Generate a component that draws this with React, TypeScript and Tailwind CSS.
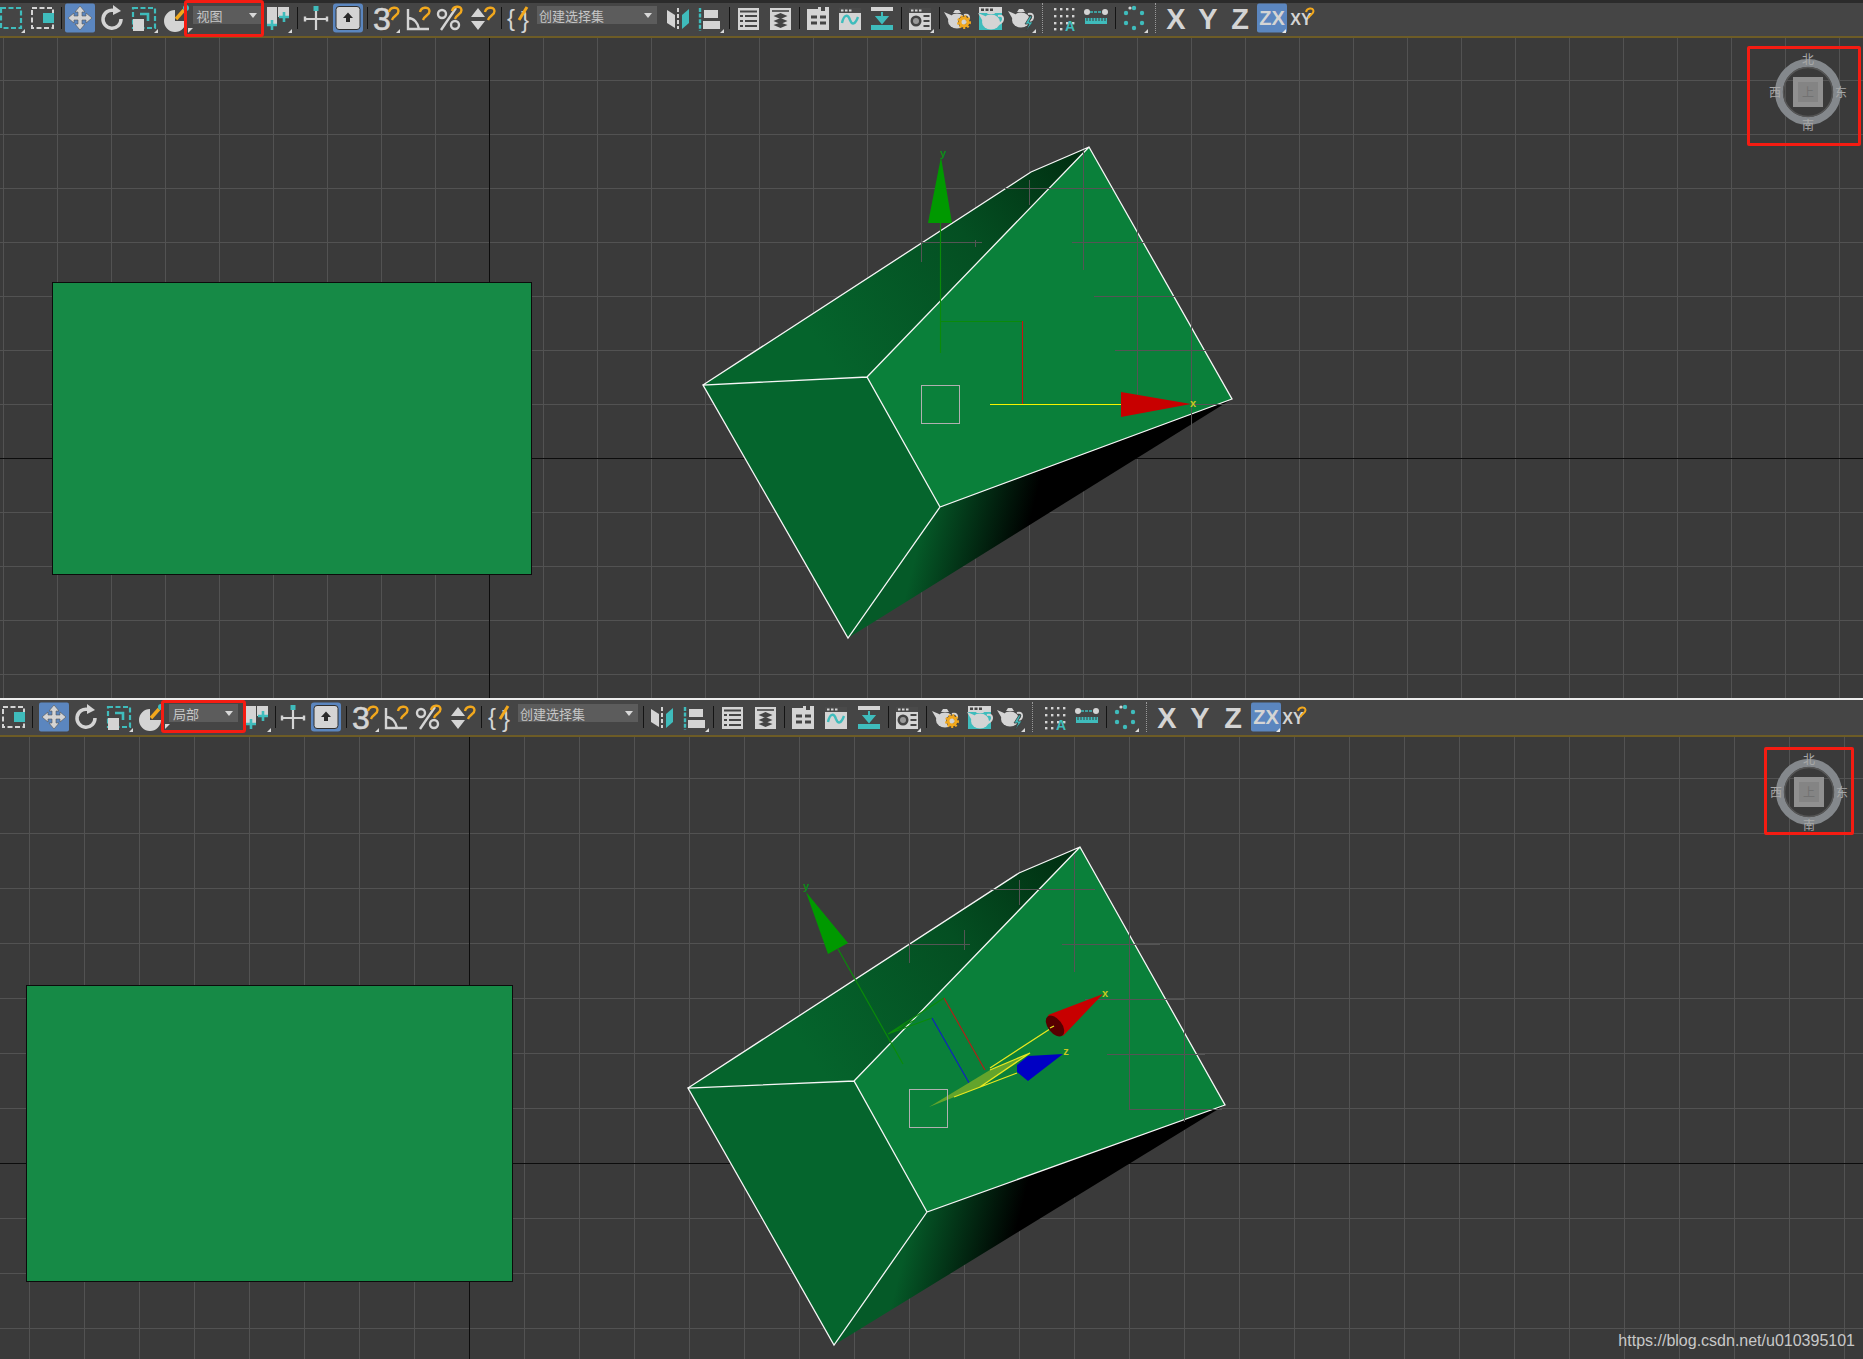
import React from "react";

const T = "#3fbcbc";
const W = "#d4d4d4";
const O = "#f2a81d";
const B = "#5b86bf";
const D = "#3c3c3c";

const hook = (x = 0, y = 0) => (
  <path transform={`translate(${x} ${y})`} d="M18 9 c1 -5 9 -6 9.5 -1 c0.3 4 -5 4.5 -6.5 9" fill="none" stroke={O} strokeWidth="2.4" />
);

const teapot = (x = 0, y = 0, fill = W) => (
  <g transform={`translate(${x} ${y})`} fill={fill}>
    <ellipse cx="14" cy="17" rx="9" ry="7.5" />
    <path d="M1 8 L8 11 L8 20 Z" />
    <path d="M10 9 h8 l-2 -3 h-4 z" />
    <path d="M21 11 c6 -2 7 5 1 8" fill="none" stroke={fill} strokeWidth="2" />
  </g>
);

const winTop = (
  <>
    <rect x="5" y="5" width="22" height="22" fill={W} />
    <rect x="5" y="5" width="22" height="5" fill="#4a4a4a" />
    <rect x="7" y="6.5" width="2.5" height="2" fill={W} />
    <rect x="11" y="6.5" width="2.5" height="2" fill={W} />
    <rect x="15" y="6.5" width="2.5" height="2" fill={W} />
  </>
);

const glyphs: Record<string, React.ReactNode> = {
  sel: <rect x="6" y="5" width="20" height="20" fill="none" stroke={T} strokeWidth="2.2" strokeDasharray="5 2.5" />,
  selwin: (
    <>
      <rect x="6" y="5" width="21" height="20" fill="none" stroke={W} strokeWidth="2" strokeDasharray="5 2.5" />
      <rect x="17" y="10" width="11" height="10" fill={T} />
    </>
  ),
  move: (
    <>
      <rect x="1" y="0.5" width="30" height="29" rx="2" fill={B} />
      <path d="M16 3 l5 6 h-3 v4 h4 v-3 l6 5 -6 5 v-3 h-4 v4 h3 l-5 6 -5 -6 h3 v-4 h-4 v3 l-6 -5 6 -5 v3 h4 v-4 h-3 z" fill={W} stroke="#555" strokeWidth="0.6" />
    </>
  ),
  rotate: (
    <>
      <path d="M25 16 a9 9 0 1 1 -7 -8.6" fill="none" stroke={W} strokeWidth="3.5" />
      <path d="M17 2 l8 6 -8 4 z" fill={W} />
    </>
  ),
  scale: (
    <>
      <rect x="5" y="5" width="22" height="20" fill="none" stroke={T} strokeWidth="2.2" strokeDasharray="5 2.5" />
      <rect x="5" y="16" width="11" height="12" fill={W} />
      <path d="M12 11 h8 v7" fill="none" stroke={T} strokeWidth="2.6" />
    </>
  ),
  pie: (
    <>
      <path d="M15 7 a11 11 0 1 0 11 11 h-11 z" fill={W} />
      <path d="M16 16 L24 7" stroke={O} strokeWidth="3.4" />
      <circle cx="26" cy="5" r="3" fill={T} />
    </>
  ),
  pivot: (
    <>
      <rect x="5" y="4" width="10" height="18" fill={W} />
      <rect x="16" y="4" width="11" height="10" fill={W} />
      <path d="M10 17 v10 M5 22 h10 M22 9 v10 M17 14 h10" stroke={T} strokeWidth="2.6" />
    </>
  ),
  axis: (
    <>
      <path d="M5 16 h22 M16 7 v20" stroke={W} strokeWidth="2.2" />
      <path d="M5 13.5 v5 M27 13.5 v5" stroke={W} strokeWidth="2.4" />
      <rect x="13.5" y="3" width="5" height="5" fill={T} />
    </>
  ),
  btn: (
    <>
      <rect x="1" y="0.5" width="30" height="29" rx="3" fill={B} />
      <rect x="4" y="3.5" width="24" height="23" rx="3" fill={W} stroke="#2f2f2f" />
      <path d="M16 9.5 l5 5.5 h-3 v4 h-4 v-4 h-3 z" fill="#2a2a2a" />
    </>
  ),
  snap: (
    <>
      <text x="3" y="27" fontSize="32" fontWeight="400" fontFamily="'Liberation Sans', sans-serif" fill={W} stroke={W} strokeWidth="0.6">3</text>
      {hook(1, 0)}
    </>
  ),
  angle: (
    <>
      <path d="M6 6 V26 H27 M6 15 c6 0 10 5 11 11" fill="none" stroke={W} strokeWidth="2.4" />
      {hook(0, 0)}
    </>
  ),
  percent: (
    <>
      <circle cx="8" cy="11" r="4" fill="none" stroke={W} strokeWidth="2.4" />
      <circle cx="21" cy="22" r="4" fill="none" stroke={W} strokeWidth="2.4" />
      <path d="M7 27 L22 5" stroke={W} strokeWidth="2.4" />
      {hook(0, -1)}
    </>
  ),
  spin: (
    <>
      <path d="M5 14 l7 -9 7 9 z M5 18 h14 l-7 9 z" fill={W} />
      {hook(1, 0)}
    </>
  ),
  brace: (
    <>
      <text x="3" y="23" fontSize="24" fontFamily="'Liberation Sans', sans-serif" fill={W}>{"{"}</text>
      <text x="17" y="25" fontSize="24" fontFamily="'Liberation Sans', sans-serif" fill={W}>{"}"}</text>
      <path d="M23 4 L15 17" stroke={O} strokeWidth="3" />
    </>
  ),
  mirror: (
    <>
      <path d="M5 7 l8 5 v13 l-8 -5 z" fill={W} />
      <path d="M16 5 v21" stroke={W} strokeWidth="2" strokeDasharray="4 2" />
      <path d="M20 12 l7 -6 v14 l-7 6 z" fill={T} />
    </>
  ),
  align: (
    <>
      <path d="M6 5 v23" stroke={T} strokeWidth="2.4" strokeDasharray="4 1.6" />
      <rect x="10" y="7" width="14" height="8" fill={W} />
      <rect x="9" y="18" width="17" height="8" fill={W} />
    </>
  ),
  list: (
    <>
      <rect x="6" y="5" width="21" height="22" fill={W} />
      <path d="M8 8.5 h17 M8 13 h3 M13 13 h12 M8 18 h3 M13 18 h12 M8 23 h3 M13 23 h12" stroke="#444" strokeWidth="2" />
    </>
  ),
  layers: (
    <>
      <rect x="6" y="5" width="21" height="22" fill={W} />
      <path d="M8 8 h17" stroke="#444" strokeWidth="1.6" />
      <path d="M16.5 10 l7 3 -7 3 -7 -3 z M16.5 15 l7 3 -7 3 -7 -3 z M16.5 19.5 l7 2.5 -7 3 -7 -3 z" fill="#444" />
    </>
  ),
  schem: (
    <>
      <path d="M5 6 h11 v-2 h3 v4 h4 v-4 h4 v23 h-22 z" fill={W} />
      <path d="M9 14 h6 M18 14 h6 M9 20 h6 M18 20 h6" stroke="#444" strokeWidth="3" />
    </>
  ),
  curve: (
    <>
      {winTop}
      <path d="M8 20 c2 -9 6 -9 8 -3 c2 5 5 5 8 -3" fill="none" stroke={T} strokeWidth="2.4" />
    </>
  ),
  dope: (
    <>
      <rect x="5" y="4" width="22" height="4" fill={W} />
      <path d="M16 9 v5 M11 14 h10 l-5 6 z" stroke={T} fill={T} strokeWidth="2" />
      <rect x="5" y="22" width="22" height="5" fill={T} />
    </>
  ),
  mat: (
    <>
      {winTop}
      <circle cx="12" cy="18" r="5.5" fill="#444" />
      <circle cx="12" cy="18" r="3" fill="#999" />
      <path d="M19.5 13 h6 M19.5 18 h6 M19.5 23 h6" stroke="#444" strokeWidth="2" />
    </>
  ),
  tea1: (
    <>
      {teapot(1, 1)}
      <circle cx="22" cy="19" r="5" fill="none" stroke={D} strokeWidth="2" />
      <circle cx="22" cy="19" r="4" fill="none" stroke={O} strokeWidth="3" />
      <circle cx="22" cy="19" r="6" fill="none" stroke={O} strokeWidth="2" strokeDasharray="2 2" />
    </>
  ),
  tea2: (
    <>
      <rect x="5" y="4" width="23" height="23" fill={T} />
      <rect x="5" y="4" width="23" height="6" fill={W} />
      <rect x="7" y="5.5" width="3" height="2.5" fill="#444" />
      <rect x="11.5" y="5.5" width="3" height="2.5" fill="#444" />
      <rect x="16" y="5.5" width="3" height="2.5" fill="#444" />
      {teapot(3, 2)}
    </>
  ),
  tea3: (
    <>
      {teapot(1, 0)}
      <path d="M24 13 l-5 8 h4 l-3 7 7 -9 h-4 l3 -6 z" fill={T} stroke={D} strokeWidth="0.8" />
    </>
  ),
  dotsA: (
    <>
      <g fill={W}>
        {[5, 12, 19].flatMap((y) => [7, 13, 19, 25].map((x) => <rect key={`${x}-${y}`} x={x} y={y} width="2.4" height="2.4" />))}
        <rect x="7" y="25" width="2.4" height="2.4" />
        <rect x="13" y="25" width="2.4" height="2.4" />
      </g>
      <text x="18" y="28" fontSize="14" fontWeight="700" fontFamily="'Liberation Sans', sans-serif" fill={T}>A</text>
    </>
  ),
  tape: (
    <>
      <circle cx="7" cy="9" r="3" fill={W} />
      <circle cx="25" cy="9" r="3" fill={W} />
      <path d="M10 9 h12" stroke={T} strokeWidth="1.6" strokeDasharray="3 1" />
      <rect x="5" y="15" width="22" height="6" fill={T} />
      <path d="M7 15 v3 M10 15 v3 M13 15 v3 M16 15 v3 M19 15 v3 M22 15 v3 M25 15 v3" stroke={D} strokeWidth="1" />
    </>
  ),
  circ: (
    <>
      <circle cx="16" cy="5" r="2.2" fill={T} />
      <circle cx="24" cy="10" r="2.2" fill={T} />
      <circle cx="24" cy="20" r="2.2" fill={T} />
      <circle cx="16" cy="25" r="2.2" fill={T} />
      <circle cx="8" cy="20" r="2.2" fill={T} />
      <circle cx="8" cy="10" r="2.2" fill={T} />
      <circle cx="12" cy="5" r="1.6" fill={W} />
    </>
  ),
  X: <text x="16" y="26" textAnchor="middle" fontSize="29" fontWeight="700" fontFamily="'Liberation Sans', sans-serif" fill={W}>X</text>,
  Y: <text x="16" y="26" textAnchor="middle" fontSize="29" fontWeight="700" fontFamily="'Liberation Sans', sans-serif" fill={W}>Y</text>,
  Z: <text x="16" y="26" textAnchor="middle" fontSize="29" fontWeight="700" fontFamily="'Liberation Sans', sans-serif" fill={W}>Z</text>,
  ZX: (
    <>
      <rect x="1" y="0.5" width="30" height="29" rx="2" fill={B} />
      <text x="16" y="22" textAnchor="middle" fontSize="20" fontWeight="700" fontFamily="'Liberation Sans', sans-serif" fill={W}>ZX</text>
    </>
  ),
  XY: (
    <>
      <text x="13" y="22" textAnchor="middle" fontSize="16" fontWeight="700" fontFamily="'Liberation Sans', sans-serif" fill={W}>XY</text>
      <path d="M18 9 c1 -4 7 -5 7.5 -1 c0.3 3 -4 4 -5 7" fill="none" stroke={O} strokeWidth="2" />
    </>
  ),
};

const flyouts = new Set(["sel", "scale", "pivot", "snap", "align", "mat", "tea3", "circ", "ZX"]);

type Item = [string, string?];

function Tool({ name, w = "w-[32px]", ddTop }: { name: string; w?: string; ddTop: string }) {
  if (name === "sep") {
    return (
      <div className={`${w} h-[30px] shrink-0 flex items-center justify-center`}>
        <div className="w-[1px] h-[22px] bg-[#141414]" />
      </div>
    );
  }
  if (name === "dot") {
    return (
      <div className={`${w} h-[30px] shrink-0 flex items-center justify-center`}>
        <div className="h-[30px] border-l border-dotted border-[#9a9a9a]" />
      </div>
    );
  }
  if (name.startsWith("dd:")) {
    const [, label, width] = name.split(":");
    return (
      <div className={`${w} h-[30px] shrink-0 flex justify-center`}>
        <div
          className={`${ddTop} ${width === "s" ? "w-[69px] pl-[4px]" : "w-[120px] pl-[2px]"} h-[18px] shrink-0 bg-[#5c5c5c] flex items-center justify-between pr-[5px] text-[13px] leading-none text-[#c6c6c6] font-['Noto_Sans_CJK_SC','Liberation_Sans',sans-serif]`}
        >
          <span>{label}</span>
          <span className="w-0 h-0 border-l-[4px] border-r-[4px] border-t-[5px] border-l-transparent border-r-transparent border-t-[#d8d8d8]" />
        </div>
      </div>
    );
  }
  return (
    <div className={`${w} h-[30px] shrink-0 flex justify-center`}>
      <svg width="32" height="30" viewBox="0 0 32 30" className="shrink-0 block overflow-visible">
        {glyphs[name]}
        {flyouts.has(name) && <path d="M30 26 V30 H26 z" fill={name === "ZX" ? "#e8e8e8" : "#d8d8d8"} />}
      </svg>
    </div>
  );
}

const topItems: Item[] = [
  ["sel", "w-[22px]"], ["gap", "w-[4px]"], ["selwin"], ["sep", "w-[6px]"], ["move"], ["rotate"], ["scale"], ["pie"],
  ["dd:视图:s", "w-[70px]"], ["pivot"], ["sep", "w-[6px]"], ["axis"], ["btn"], ["sep", "w-[6px]"], ["snap"], ["angle"], ["percent"], ["spin"],
  ["sep", "w-[6px]"], ["brace"], ["dd:创建选择集:l", "w-[122px]"], ["gap", "w-[4px]"], ["mirror"], ["align"], ["sep", "w-[6px]"], ["list"], ["layers"],
  ["sep", "w-[6px]"], ["schem"], ["curve"], ["dope"], ["sep", "w-[6px]"], ["mat"], ["sep", "w-[6px]"], ["tea1"], ["tea2"], ["tea3"],
  ["dot", "w-[8px]"], ["dotsA", "w-[33px]"], ["tape", "w-[33px]"], ["sep", "w-[6px]"], ["circ"], ["dot", "w-[10px]"],
  ["X"], ["Y"], ["Z"], ["ZX"], ["XY"],
];

const bottomItems: Item[] = [
  ["selwin", "w-[26px]"], ["sep", "w-[12px]"], ["move"], ["rotate"], ["scale", "w-[33px]"], ["pie", "w-[31px]"],
  ["dd:局部:s", "w-[75px]"], ["pivot"], ["sep", "w-[4px]"], ["axis"], ["btn", "w-[34px]"], ["sep", "w-[6px]"], ["snap", "w-[31px]"], ["angle"], ["percent", "w-[34px]"], ["spin"],
  ["sep", "w-[7px]"], ["brace", "w-[31px]"], ["dd:创建选择集:l", "w-[124px]"], ["sep", "w-[6px]"], ["mirror"], ["align", "w-[33px]"], ["sep", "w-[5px]"], ["list"], ["layers", "w-[33px]"],
  ["sep", "w-[6px]"], ["schem"], ["curve", "w-[33px]"], ["dope", "w-[33px]"], ["sep", "w-[6px]"], ["mat"], ["sep", "w-[7px]"], ["tea1"], ["tea2", "w-[33px]"], ["tea3"],
  ["dot", "w-[11px]"], ["dotsA"], ["tape", "w-[33px]"], ["sep", "w-[6px]"], ["circ"], ["dot", "w-[10px]"],
  ["X"], ["Y", "w-[33px]"], ["Z", "w-[33px]"], ["ZX", "w-[33px]"], ["XY", "w-[28px]"],
];

function Toolbar({ items, className, ddTop, children }: { items: Item[]; className: string; ddTop: string; children: React.ReactNode }) {
  return (
    <div className={`relative flex items-start shrink-0 bg-[#454545] border-b-2 border-b-[#6d5c26] ${className}`}>
      {items.map(([name, w], i) =>
        name === "gap" ? <div key={i} className={`${w} shrink-0`} /> : <Tool key={i} name={name} w={w} ddTop={ddTop} />
      )}
      {children}
    </div>
  );
}

function Flyout() {
  return <span className="absolute left-[1px] bottom-[1px] w-0 h-0 border-b-[5px] border-r-[5px] border-r-transparent border-b-[#d8d8d8] rotate-90" />;
}

function Grid({ x0, y0, step, top, bottom }: { x0: number; y0: number; step: number; top: number; bottom: number }) {
  const xs: number[] = [];
  const ys: number[] = [];
  for (let x = x0 % step; x < 1863; x += step) xs.push(x);
  for (let y = y0 - step * Math.ceil((y0 - top) / step); y < bottom; y += step) ys.push(y);
  return (
    <g shapeRendering="crispEdges">
      {xs.map((x) => <line key={`v${x}`} x1={x} x2={x} y1={top} y2={bottom} stroke="#525252" />)}
      {ys.map((y) => <line key={`h${y}`} x1={0} x2={1863} y1={y} y2={y} stroke="#525252" />)}
      <line x1={x0} x2={x0} y1={top} y2={bottom} stroke="#0c0c0c" />
      <line x1={0} x2={1863} y1={y0} y2={y0} stroke="#0c0c0c" />
    </g>
  );
}

type P = [number, number];
const pts = (a: P[]) => a.map((p) => p.join(",")).join(" ");

function Box({ id, peak, shoulder, right, inner, corner, left, bottom }: { id: string; peak: P; shoulder: P; right: P; inner: P; corner: P; left: P; bottom: P }) {
  return (
    <g>
      <defs>
        <linearGradient id={`${id}a`} gradientUnits="userSpaceOnUse" x1={corner[0] - 40} y1={corner[1] - 20} x2={peak[0] + 10} y2={peak[1] + 20}>
          <stop offset="0" stopColor="#05642c" />
          <stop offset="0.55" stopColor="#044f22" />
          <stop offset="1" stopColor="#002d10" />
        </linearGradient>
        <linearGradient id={`${id}b`} gradientUnits="userSpaceOnUse" x1={inner[0] - 15} y1={inner[1] + 10} x2={inner[0] + 85} y2={inner[1] + 35}>
          <stop offset="0" stopColor="#055a28" />
          <stop offset="1" stopColor="#000000" />
        </linearGradient>
      </defs>
      <polygon points={pts([bottom, inner, right])} fill={`url(#${id}b)`} />
      <polygon points={pts([left, shoulder, peak, corner])} fill={`url(#${id}a)`} />
      <polygon points={pts([left, corner, inner, bottom])} fill="#05652d" />
      <polygon points={pts([peak, right, inner, corner])} fill="#0a803a" />
      <path
        d={`M${left} L${shoulder} L${peak} L${right} L${inner} L${corner} L${left} L${bottom} L${inner} M${corner} L${peak}`}
        fill="none"
        stroke="#f6f6f6"
        strokeWidth="1.3"
      />
    </g>
  );
}

function ViewCube({ cx, cy }: { cx: number; cy: number }) {
  const font = "'Noto Sans CJK SC', sans-serif";
  return (
    <g>
      <circle cx={cx} cy={cy} r="29" fill="none" stroke="#84888c" strokeWidth="8" />
      <circle cx={cx} cy={cy} r="24.5" fill="none" stroke="#555" strokeWidth="1.5" />
      <rect x={cx - 15} y={cy - 15} width="30" height="30" fill="#909090" />
      <rect x={cx - 10} y={cy - 10} width="20" height="20" fill="#848484" />
      <g fontFamily={font} textAnchor="middle" fontSize="12">
        <text x={cx} y={cy + 5} fill="#727272">上</text>
        <g fill="#a8a8a8">
          <text x={cx} y={cy - 28}>北</text>
          <text x={cx} y={cy + 38}>南</text>
          <text x={cx - 33} y={cy + 5}>西</text>
          <text x={cx + 33} y={cy + 5}>东</text>
        </g>
      </g>
    </g>
  );
}

const Seg = ({ d, c = "#555" }: { d: string; c?: string }) => <path d={d} fill="none" stroke={c} shapeRendering="crispEdges" />;

function TopScene() {
  return (
    <svg viewBox="0 38 1863 660" className="block w-[1863px] h-[660px]">
      <Grid x0={489.5} y0={458.5} step={54} top={38} bottom={698} />
      <rect x="52.5" y="282.5" width="479" height="292" fill="#168a46" stroke="#0b0b0b" />
      <Box id="t" peak={[1089, 147]} shoulder={[1031, 172]} right={[1232, 399]} inner={[940, 507]} corner={[867, 377]} left={[703, 385]} bottom={[848, 638]} />
      <Seg d="M921.5 240 V262 M975.5 240 V247 M1029.5 180 V205 M1083.5 150 V270 M1137.5 230 V400 M1191.5 310 V480 M1005 188.5 H1112 M921 242.5 H982 M1072 242.5 H1145 M1094 296.5 H1175 M1115 350.5 H1210 M1192 404.5 H1232" />
      <line x1="940.5" y1="223" x2="940.5" y2="353" stroke="#0a8a0a" strokeWidth="1.2" />
      <polygon points="928,223 952,223 941,157" fill="#009900" />
      <text x="943" y="157" fontSize="11" fontFamily="'Liberation Sans', sans-serif" fontWeight="700" fill="#0c8c18" textAnchor="middle">y</text>
      <path d="M940 321.5 H1023" stroke="#0a8a0a" fill="none" shapeRendering="crispEdges" />
      <path d="M1022.5 321 V404" stroke="#cc1010" fill="none" strokeWidth="1" shapeRendering="crispEdges" />
      <path d="M990 404.5 H1121" stroke="#f4f400" fill="none" shapeRendering="crispEdges" />
      <polygon points="1121,392 1121,417 1191,404" fill="#c80000" />
      <text x="1193" y="407" fontSize="11" fontFamily="'Liberation Sans', sans-serif" fontWeight="700" fill="#c8c820" textAnchor="middle">x</text>
      <rect x="921.5" y="385.5" width="38" height="38" fill="none" stroke="#b0b0b0" />
      <ViewCube cx={1808} cy={92} />
    </svg>
  );
}

function BottomScene() {
  return (
    <svg viewBox="0 737 1863 622" className="block w-[1863px] h-[622px]">
      <Grid x0={469.5} y0={1163.5} step={55} top={737} bottom={1359} />
      <rect x="26.5" y="985.5" width="486" height="296" fill="#168a46" stroke="#0b0b0b" />
      <Box id="b" peak={[1080, 847]} shoulder={[1019, 873]} right={[1225, 1105]} inner={[927, 1212]} corner={[854, 1081]} left={[688, 1088]} bottom={[834, 1345]} />
      <Seg d="M964.5 930 V950 M909.5 935 V963 M1019.5 880 V905 M1074.5 855 V972 M1129.5 930 V1110 M1184.5 1030 V1122 M990 889.5 H1095 M909 944.5 H970 M1062 944.5 H1160 M1085 999.5 H1185 M1107 1054.5 H1205 M1129 1109.5 H1222" />
      <line x1="838" y1="949" x2="903" y2="1064" stroke="#0a8a0a" strokeWidth="1.2" />
      <polygon points="806,892 848,943 828,954" fill="#009900" />
      <text x="806" y="890" fontSize="11" fontFamily="'Liberation Sans', sans-serif" fontWeight="700" fill="#0c8c18" textAnchor="middle">y</text>
      <path d="M944 998 L888 1034 L932 1018 M888 1034 L915 1020" stroke="#0a8a0a" strokeWidth="1.2" fill="none" />
      <line x1="944" y1="998" x2="985" y2="1070" stroke="#b02018" strokeWidth="1.2" />
      <line x1="932" y1="1018" x2="972" y2="1088" stroke="#1020c0" strokeWidth="1.2" />
      <polygon points="929,1107 990,1070 1030,1053 980,1087" fill="#63a42c" />
      <path d="M954 1097 L1017 1073 M990 1068 L1053 1027 M980 1087 L1030 1053 L990 1070" stroke="#e8e820" strokeWidth="1.3" fill="none" />
      <polygon points="1048,1015 1103,994 1063,1036" fill="#c80000" />
      <ellipse cx="1055" cy="1026" rx="7" ry="12" transform="rotate(-38 1055 1026)" fill="#560000" />
      <path d="M1050 1028 L1054 1026" stroke="#e8e820" strokeWidth="1.3" />
      <polygon points="1063,1054 1028,1056 1017,1065 1017,1072 1028,1081" fill="#0000c4" />
      <text x="1105" y="997" fontSize="11" fontFamily="'Liberation Sans', sans-serif" fontWeight="700" fill="#c8c820" textAnchor="middle">x</text>
      <text x="1066" y="1055" fontSize="11" fontFamily="'Liberation Sans', sans-serif" fontWeight="700" fill="#c8c820" textAnchor="middle">z</text>
      <rect x="909.5" y="1089.5" width="38" height="38" fill="none" stroke="#b0b0b0" />
      <ViewCube cx={1809} cy={792} />
    </svg>
  );
}

export default function App() {
  return (
    <div className="w-[1863px] h-[1359px] flex flex-col overflow-hidden bg-[#3a3a3a]">
      <Toolbar items={topItems} className="h-[38px] border-t-[3px] border-t-[#2b2b2b]" ddTop="mt-[3px]">
        <div className="absolute left-[184px] top-[-3px] w-[80px] h-[37px] border-[3px] border-[#f51c12] rounded-[3px]">
          <Flyout />
        </div>
      </Toolbar>
      <div className="relative h-[660px] shrink-0">
        <TopScene />
        <div className="absolute left-[1747px] top-[8px] w-[114px] h-[100px] border-[3px] border-[#f51c12] rounded-[2px]" />
      </div>
      <div className="h-[2px] shrink-0 bg-[#ececec]" />
      <Toolbar items={bottomItems} className="h-[37px] pt-[2px]" ddTop="mt-[2px]">
        <div className="absolute left-[161px] top-0 w-[85px] h-[33px] border-[3px] border-[#f51c12] rounded-[3px]">
          <Flyout />
        </div>
      </Toolbar>
      <div className="relative flex-1">
        <BottomScene />
        <div className="absolute left-[1764px] top-[10px] w-[90px] h-[88px] border-[3px] border-[#f51c12] rounded-[2px]" />
        <span className="absolute right-[8px] bottom-[10px] text-[16px] leading-none text-[#c8c8c8] font-['Liberation_Sans',sans-serif]">
          https://blog.csdn.net/u010395101
        </span>
      </div>
    </div>
  );
}
